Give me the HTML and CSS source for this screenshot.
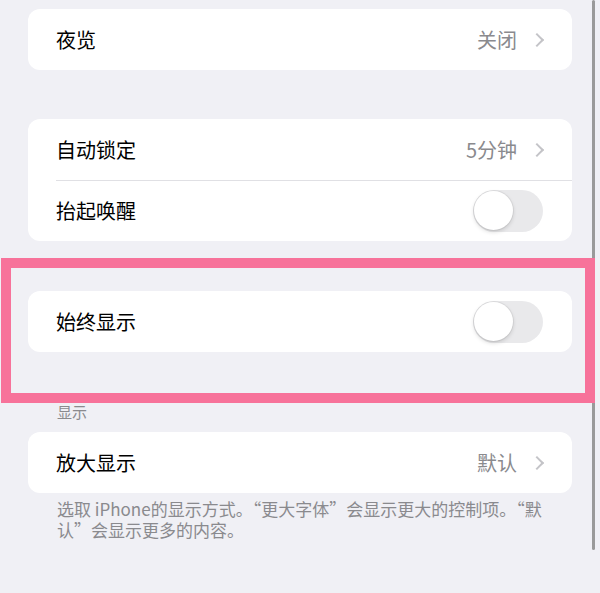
FILE: index.html
```html
<!DOCTYPE html>
<html lang="zh-CN">

<head>
    <meta charset="UTF-8">
    <meta name="viewport" content="width=device-width, initial-scale=1.0">
    <title>显示与亮度</title>
    <link rel="stylesheet" href="styles.css">
</head>

<body>
    <div class="page">

        <div class="group">
            <div class="row">
                <span class="label">夜览</span>
                <span class="value">关闭</span>
                <span class="chevron"></span>
            </div>
        </div>

        <div class="group">
            <div class="row">
                <span class="label">自动锁定</span>
                <span class="value">5分钟</span>
                <span class="chevron"></span>
            </div>
            <div class="row line">
                <span class="label">抬起唤醒</span>
                <span class="switch"><span class="knob"></span></span>
            </div>
        </div>

        <div class="group always-on">
            <div class="row">
                <span class="label">始终显示</span>
                <span class="switch"><span class="knob"></span></span>
            </div>
        </div>

        <div class="header">显示</div>
        <div class="group">
            <div class="row">
                <span class="label">放大显示</span>
                <span class="value">默认</span>
                <span class="chevron"></span>
            </div>
        </div>
        <div class="footer">选取 iPhone的显示方式。“更大字体”会显示更大的控制项。“默认”会显示更多的内容。</div>

    </div>

    <!-- 滚动条和高亮框 -->
    <div class="scrollbar"></div>
    <div class="highlight"></div>
</body>

</html>
```

FILE: styles.css
```css
body {
    margin: 0;
    background: #f0f0f5;
    font-family: "Noto Sans CJK SC", sans-serif;
    color: #000;
}

.page {
    padding: 9px 28px 0 28px;
}

.group {
    background: #fff;
    border-radius: 12px;
    margin-bottom: 49px;
}

.always-on {
    margin-top: 50px;
    margin-bottom: 0;
}

.row {
    height: 61px;
    display: flex;
    align-items: center;
    padding: 0 29px 0 28px;
    font-size: 20px;
    position: relative;
}

.line::before {
    content: "";
    position: absolute;
    top: 0;
    left: 28px;
    right: 0;
    border-top: 1px solid #e0e0e4;
}

.label {
    flex: 1;
}

.value {
    color: #8a8a8e;
}

.chevron {
    width: 8px;
    height: 8px;
    border-top: 2px solid #c4c4c8;
    border-right: 2px solid #c4c4c8;
    transform: rotate(45deg);
    margin: 0 1px 0 15px;
}

.switch {
    width: 70px;
    height: 42px;
    border-radius: 21px;
    background: #e9e9eb;
    position: relative;
}

.knob {
    position: absolute;
    top: 1.5px;
    left: 1px;
    width: 39px;
    height: 39px;
    border-radius: 50%;
    background: #fff;
    box-shadow: 0 2px 4px rgba(0, 0, 0, 0.15), 0 0 0 1px rgba(0, 0, 0, 0.05);
}

.header {
    margin-top: 50px;
    padding-left: 29px;
    font-size: 15px;
    line-height: 20px;
    color: #8a8a8e;
    margin-bottom: 10px;
}

.group:has(+ .footer) {
    margin-bottom: 0;
}

.footer {
    margin-top: 5px;
    padding: 0 28px 0 29px;
    font-size: 17px;
    line-height: 21px;
    color: #8a8a8e;
}

.scrollbar {
    position: absolute;
    top: 0;
    left: 592px;
    width: 3px;
    height: 550px;
    border-radius: 2px;
    background: #9a9a9a;
}

.highlight {
    position: absolute;
    top: 258px;
    left: 1px;
    width: 574px;
    height: 125px;
    border: 10px solid #f7729a;
}
```
